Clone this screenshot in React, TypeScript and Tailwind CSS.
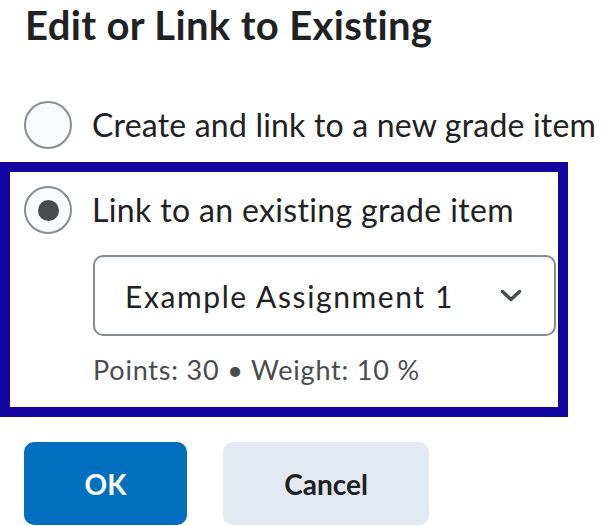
import React from "react";

function Radio({ checked }: { checked?: boolean }) {
  return (
    <span className="flex h-12 w-12 shrink-0 items-center justify-center rounded-full border-2 border-[#868c8f] bg-[#f9fbff]">
      {checked && <span className="h-[21px] w-[21px] rounded-full bg-[#494c4e]" />}
    </span>
  );
}

export default function App() {
  return (
    <div className="h-[526px] w-[602px] overflow-hidden bg-white font-['Lato',sans-serif] text-[#202122]">
      <h1 className="pl-[25px] pt-px text-[40px] font-bold leading-[48px] tracking-[0.35px]">Edit or Link to Existing</h1>

      <label className="mt-[52px] flex h-12 items-center gap-5 pl-6">
        <Radio />
        <span className="whitespace-nowrap text-[32px] leading-[38px] tracking-[0.2px]">Create and link to a new grade item</span>
      </label>

      <div className="mt-[13px] w-[568px] border-[10px] border-[#11069f] pb-[21px] pl-[14px] pr-[2px] pt-[14px]">
        <label className="flex h-12 items-center gap-5">
          <Radio checked />
          <span className="whitespace-nowrap text-[32px] leading-[38px] tracking-[0.35px]">Link to an existing grade item</span>
        </label>
        <div className="ml-[69px] mt-[21px]">
          <div className="flex h-[81px] items-center justify-between rounded-[10px] border-2 border-[#868c8f] pl-[30px] pr-[32px] shadow-[inset_0_2px_0_0_rgba(177,185,190,0.2)]">
            <span className="whitespace-nowrap text-[30px] leading-[36px] tracking-[1.6px]">Example Assignment 1</span>
            <svg width="22" height="13" viewBox="0 0 22 13" fill="none">
              <path d="M2.5 2.5 L11 10.5 L19.5 2.5" stroke="#494c4e" strokeWidth="3.5" strokeLinecap="round" strokeLinejoin="round" />
            </svg>
          </div>
          <p className="mt-[17px] whitespace-nowrap text-[27px] leading-[33px] tracking-[0.8px] text-[#494c4e]">Points: 30 • Weight: 10 %</p>
        </div>
      </div>

      <div className="mt-[25px] flex gap-9 pl-6">
        <button className="h-[83px] w-[163px] rounded-[10px] bg-[#006fbf] text-[28px] font-bold text-white">OK</button>
        <button className="h-[83px] w-[206px] rounded-[10px] bg-[#e3e9f1] text-[28px] font-bold text-[#202122]">Cancel</button>
      </div>
    </div>
  );
}
